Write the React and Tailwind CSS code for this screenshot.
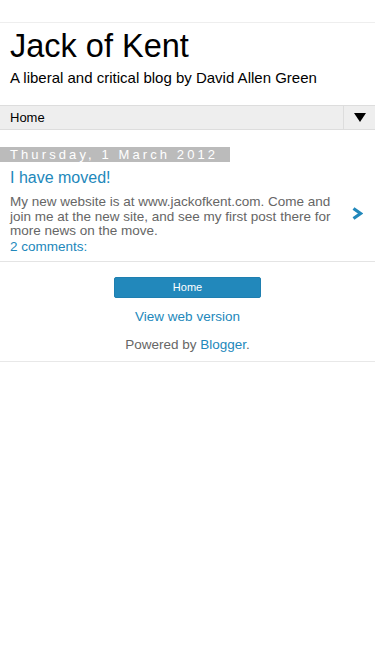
import React from 'react';

export default function App() {
  return (
    <div className="min-h-[667px] bg-white text-black" style={{ fontFamily: '"Liberation Sans", Arial, sans-serif' }}>
      {/* Header */}
      <div className="mt-[22px] border-t border-[#eeeeee] px-[10px] pt-[5px] pb-[18px]">
        <h1 className="text-[32.5px] leading-[36px] font-normal">Jack of Kent</h1>
        <p className="mt-[5px] text-[15px] leading-[18px]">A liberal and critical blog by David Allen Green</p>
      </div>

      {/* Nav bar */}
      <div className="flex h-[25px] items-stretch border-y border-[#dddddd] bg-[#eeeeee]">
        <div className="flex flex-1 items-center px-[10px] text-[13px]">Home</div>
        <div className="flex w-[32px] items-center justify-center border-l border-[#dddddd]">
          <svg width="12" height="9" viewBox="0 0 12 9">
            <polygon points="0,0 12,0 6,9" fill="#000" />
          </svg>
        </div>
      </div>

      {/* Post */}
      <div className="border-b border-[#e4e4e4] pt-[17px] pb-[7px]">
        <div className="w-[230px] bg-[#bbbbbb] px-[10px] text-[13px] leading-[15px] tracking-[3.1px] text-white">
          Thursday, 1 March 2012
        </div>
        <div className="flex items-center pr-[12px]">
          <div className="flex-1 px-[10px]">
            <h3 className="mt-[7px] text-[16px] leading-[18px] text-[#2288bb]">I have moved!</h3>
            <p className="mt-[8px] text-[13.5px] leading-[14.5px] text-[#666666]">
              My new website is at www.jackofkent.com. Come and join me at the new site, and see my first post there for more news on the move.
            </p>
            <div className="mt-[1px] text-[13.5px] leading-[14.5px] text-[#2288bb]">2 comments:</div>
          </div>
          <svg width="11" height="13" viewBox="0 0 11 13" className="mt-[11px]">
            <polyline points="1.5,1.5 8.5,6.5 1.5,11.5" fill="none" stroke="#2288bb" strokeWidth="3.2" />
          </svg>
        </div>
      </div>

      {/* Footer */}
      <div className="flex flex-col items-center border-b border-[#e8e8e8] pt-[15px] pb-[8px]">
        <div className="flex h-[21px] w-[147px] items-center justify-center rounded-[2px] border border-[#1f7fb0] bg-[#2288bb] text-[11px] text-white">
          Home
        </div>
        <div className="mt-[11px] text-[13.5px] leading-[16px] text-[#2288bb]">View web version</div>
        <div className="mt-[12px] text-[13.5px] leading-[16px] text-[#666666]">
          Powered by <span className="text-[#2288bb]">Blogger</span>.
        </div>
      </div>
    </div>
  );
}
